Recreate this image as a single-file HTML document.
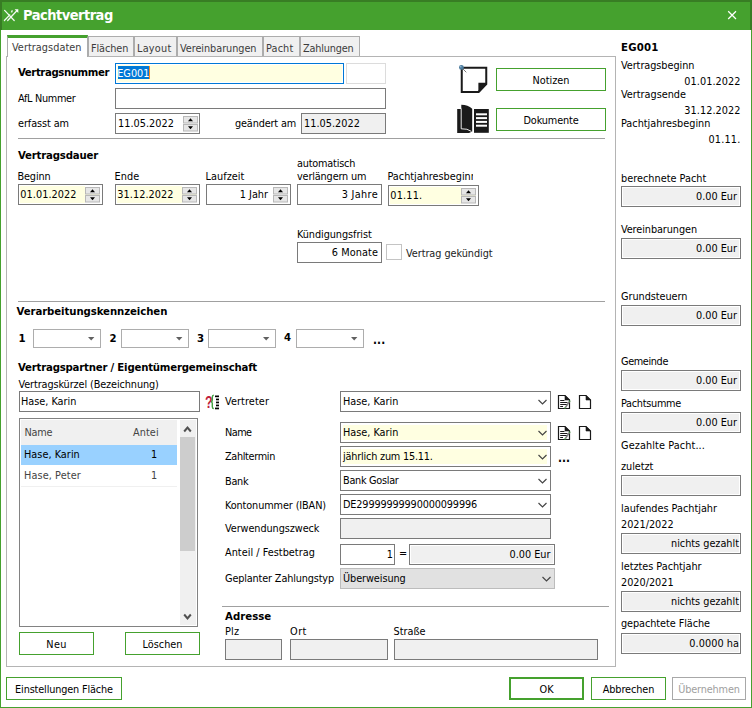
<!DOCTYPE html>
<html><head><meta charset="utf-8"><title>Pachtvertrag</title>
<style>
html,body{margin:0;padding:0;background:#fff}
body{width:752px;height:708px;position:relative;overflow:hidden;font-family:'DejaVu Sans Condensed','Liberation Sans',sans-serif;font-size:10.8px;color:#000}
.a{position:absolute}
.t{white-space:nowrap;line-height:13px;font-size:10.8px}
.f{overflow:hidden}
.b{font-weight:bold;font-size:11.3px}
</style></head><body>
<div class="a " style="left:0px;top:0px;width:752px;height:30px;background:#45a12e"></div>
<div class="a " style="left:0px;top:0px;width:752px;height:2px;background:#387d24"></div>
<div class="a " style="left:0px;top:0px;width:2px;height:30px;background:#387d24"></div>
<div class="a " style="left:750px;top:0px;width:2px;height:30px;background:#387d24"></div>
<div class="a " style="left:0px;top:30px;width:1px;height:678px;background:#45a12e"></div>
<div class="a " style="left:751px;top:30px;width:1px;height:678px;background:#45a12e"></div>
<div class="a " style="left:0px;top:707px;width:752px;height:1px;background:#45a12e"></div>
<div class="a t " style="left:23px;top:11px;font-weight:bold;font-size:14.5px;color:#fff;line-height:18px;top:6px"><span style="letter-spacing:-0.508px">Pachtvertrag</span></div>
<svg class="a" style="left:3px;top:8px" width="17" height="14" viewBox="0 0 17 14"><g stroke="#fff" stroke-width="1.25" fill="none" stroke-linecap="round" opacity="0.95"><path d="M1.6 2.4 L11.2 12.5"/><path d="M1.4 12.5 L6.8 6.9"/><path d="M4.7 12.5 L13.6 3"/></g><path d="M11.6 1.2 H15.3 V4.9 Z" fill="#fff"/><path d="M8.2 2.6 L10 2.2 L9.4 4.6 L7.8 4.4Z" fill="#fff" opacity="0.85"/></svg>
<svg class="a" style="left:727px;top:10px" width="11" height="11" viewBox="0 0 11 11"><path d="M1.2 1.2 L9 9 M9 1.2 L1.2 9" stroke="#fff" stroke-width="1.25" fill="none"/></svg>
<div class="a " style="left:88px;top:36px;width:46px;height:21px;border:1px solid #acacac;background:#f0f0f0;box-sizing:border-box"></div>
<div class="a t " style="left:91px;top:41.5px;color:#3c3c3c"><span style="letter-spacing:-0.082px">Flächen</span></div>
<div class="a " style="left:134px;top:36px;width:43px;height:21px;border:1px solid #acacac;background:#f0f0f0;box-sizing:border-box"></div>
<div class="a t " style="left:137px;top:41.5px;color:#3c3c3c"><span style="letter-spacing:0.247px">Layout</span></div>
<div class="a " style="left:177px;top:36px;width:86px;height:21px;border:1px solid #acacac;background:#f0f0f0;box-sizing:border-box"></div>
<div class="a t " style="left:180px;top:41.5px;color:#3c3c3c"><span style="letter-spacing:-0.044px">Vereinbarungen</span></div>
<div class="a " style="left:263px;top:36px;width:37px;height:21px;border:1px solid #acacac;background:#f0f0f0;box-sizing:border-box"></div>
<div class="a t " style="left:266px;top:41.5px;color:#3c3c3c"><span style="letter-spacing:0.152px">Pacht</span></div>
<div class="a " style="left:300px;top:36px;width:60px;height:21px;border:1px solid #acacac;background:#f0f0f0;box-sizing:border-box"></div>
<div class="a t " style="left:303px;top:41.5px;color:#3c3c3c"><span style="letter-spacing:-0.188px">Zahlungen</span></div>
<div class="a " style="left:6px;top:56px;width:610px;height:611px;border:1px solid #b4b4b4;box-sizing:border-box;background:#fff"></div>
<div class="a " style="left:7px;top:35px;width:81px;height:22px;border:1px solid #acacac;border-bottom:none;border-top:3px solid #45a12e;background:#fff;box-sizing:border-box"></div>
<div class="a t " style="left:12px;top:41px;color:#3c3c3c"><span style="letter-spacing:0.052px">Vertragsdaten</span></div>
<div class="a t b" style="left:18px;top:66px;"><span style="letter-spacing:-0.413px">Vertragsnummer</span></div>
<div class="a " style="left:115px;top:63px;width:229px;height:21px;border:1px solid #0078d7;background:#fff;box-sizing:border-box"><div class="a" style="left:1px;top:1px;right:1px;bottom:1px;background:#ffffe1"></div><span class="a t" style="left:2px;top:2px;width:31px;height:13px;line-height:15.6px;background:#0078d7;color:#fff;overflow:hidden;text-indent:-0.8px"><span style="letter-spacing:0.019px">EG001</span></span><div class="a" style="left:33px;top:2px;width:1px;height:13px;background:#ff8c1a"></div></div>
<div class="a " style="left:346px;top:63px;width:40px;height:21px;border:1px solid #dcdcdc;background:#fff;box-sizing:border-box"></div>
<div class="a t " style="left:18px;top:92px;"><span style="letter-spacing:-0.300px">AfL Nummer</span></div>
<div class="a t f" style="left:115px;top:88px;width:271px;height:21px;border:1px solid #7a7a7a;background:#fff;box-sizing:border-box;line-height:19px;text-align:left;padding:0 2px;color:#000;"></div>
<div class="a t " style="left:18px;top:117px;"><span style="letter-spacing:-0.077px">erfasst am</span></div>
<div class="a t f" style="left:115px;top:113px;width:85px;height:21px;border:1px solid #7a7a7a;background:#fff;box-sizing:border-box;line-height:19px;text-align:left;padding:0 2px;color:#000;"><span><span style="letter-spacing:0.039px">11.05.2022</span></span></div>
<svg class="a" style="left:183px;top:116px" width="15" height="16" viewBox="0 0 15 16"><rect x="0.5" y="0.5" width="14" height="6.5" fill="#e6e6e6" stroke="#b8b8b8"/><path d="M5 5.2 h5 l-2.5 -3z" fill="#000"/><rect x="0.5" y="8.5" width="14" height="6.5" fill="#e6e6e6" stroke="#b8b8b8"/><path d="M5 10.3 h5 l-2.5 3z" fill="#000"/></svg>
<div class="a t " style="left:235px;top:117px;"><span style="letter-spacing:-0.155px">geändert am</span></div>
<div class="a t f" style="left:301px;top:113px;width:85px;height:21px;border:1px solid #7a7a7a;background:#f0f0f0;box-sizing:border-box;line-height:19px;text-align:left;padding:0 2px;color:#000;"><span><span style="letter-spacing:0.039px">11.05.2022</span></span></div>
<div class="a " style="left:18px;top:138px;width:587px;height:1px;background:#a0a0a0"></div>
<svg class="a" style="left:455px;top:62px" width="36" height="34" viewBox="0 0 36 34"><g transform="translate(-455,-62)"><path d="M461.75 67.75 H486.25 V84 L478.5 92 H461.75 Z" fill="#fff" stroke="#1a1a1a" stroke-width="2"/><path d="M478.4 82.7 H487 V84 L479.4 92.6 H478.4 Z" fill="#1a1a1a"/><path d="M462.5 68.5 L466.3 72.3" stroke="#555" stroke-width="0.8"/><circle cx="461.4" cy="67.4" r="2.4" fill="#4a7a9c"/><circle cx="460.8" cy="66.8" r="0.8" fill="#9cc0dc"/></g></svg>
<div class="a t" style="left:496px;top:68px;width:110px;height:23px;border:1px solid #45a12e;background:#fff;box-sizing:border-box;line-height:24.6px;text-align:center;color:#000;overflow:hidden"><span style="letter-spacing:0.007px">Notizen</span></div>
<svg class="a" style="left:455px;top:103px" width="36" height="32" viewBox="0 0 36 32"><g transform="translate(-455,-103)"><path d="M457.2 109 H461.3 V104.8 Q468 105 472.2 108.8 V131.4 L469 133 H457.2 Z" fill="#1a1a1a"/><path d="M461.2 108.6 V128.8 Q467.5 128.4 471.4 131.4" fill="none" stroke="#fff" stroke-width="0.9"/><rect x="474" y="109" width="14.8" height="23.8" fill="#1a1a1a"/><g fill="#fff"><rect x="476" y="113.3" width="11" height="2"/><rect x="476" y="117.1" width="11" height="2"/><rect x="476" y="120.9" width="11" height="2"/><rect x="476" y="124.7" width="11" height="2"/></g></g></svg>
<div class="a t" style="left:496px;top:108px;width:110px;height:23px;border:1px solid #45a12e;background:#fff;box-sizing:border-box;line-height:24.6px;text-align:center;color:#000;overflow:hidden"><span style="letter-spacing:-0.141px">Dokumente</span></div>
<div class="a t b" style="left:18px;top:149px;"><span style="letter-spacing:-0.192px">Vertragsdauer</span></div>
<div class="a t " style="left:17.5px;top:170px;"><span style="letter-spacing:-0.138px">Beginn</span></div>
<div class="a t " style="left:114.5px;top:170px;"><span style="letter-spacing:0.074px">Ende</span></div>
<div class="a t " style="left:205.5px;top:170px;"><span style="letter-spacing:0.059px">Laufzeit</span></div>
<div class="a t " style="left:297px;top:157px;"><span style="letter-spacing:-0.195px">automatisch</span></div>
<div class="a t " style="left:297px;top:170px;"><span style="letter-spacing:-0.150px">verlängern um</span></div>
<div class="a " style="left:387px;top:168px;width:85.5px;height:18px;overflow:hidden"><div class="t" style="position:absolute;left:0.5px;top:2px"><span style="letter-spacing:-0.010px">Pachtjahresbeginn</span></div></div>
<div class="a t f" style="left:18px;top:184px;width:85px;height:21px;border:1px solid #7a7a7a;background:#fff;box-sizing:border-box;line-height:19px;text-align:left;padding:0 1.3px;color:#000;"><div class="a" style="left:1px;top:1px;right:17px;bottom:1px;background:#ffffe1"></div><span style="position:relative"><span style="letter-spacing:0.059px">01.01.2022</span></span></div>
<svg class="a" style="left:85px;top:187px" width="15" height="16" viewBox="0 0 15 16"><rect x="0" y="7" width="15" height="1.2" fill="#ffffe1"/><rect x="0.5" y="0.5" width="14" height="6.5" fill="#e6e6e6" stroke="#b8b8b8"/><path d="M5 5.2 h5 l-2.5 -3z" fill="#000"/><rect x="0.5" y="8.5" width="14" height="6.5" fill="#e6e6e6" stroke="#b8b8b8"/><path d="M5 10.3 h5 l-2.5 3z" fill="#000"/></svg>
<div class="a t f" style="left:115px;top:184px;width:85px;height:21px;border:1px solid #7a7a7a;background:#fff;box-sizing:border-box;line-height:19px;text-align:left;padding:0 1.3px;color:#000;"><div class="a" style="left:1px;top:1px;right:17px;bottom:1px;background:#ffffe1"></div><span style="position:relative"><span style="letter-spacing:0.059px">31.12.2022</span></span></div>
<svg class="a" style="left:182px;top:187px" width="15" height="16" viewBox="0 0 15 16"><rect x="0" y="7" width="15" height="1.2" fill="#ffffe1"/><rect x="0.5" y="0.5" width="14" height="6.5" fill="#e6e6e6" stroke="#b8b8b8"/><path d="M5 5.2 h5 l-2.5 -3z" fill="#000"/><rect x="0.5" y="8.5" width="14" height="6.5" fill="#e6e6e6" stroke="#b8b8b8"/><path d="M5 10.3 h5 l-2.5 3z" fill="#000"/></svg>
<div class="a t f" style="left:206px;top:184px;width:85px;height:21px;border:1px solid #7a7a7a;background:#fff;box-sizing:border-box;line-height:19px;text-align:right;padding:0 2px;color:#000;padding-right:22px"><span>1 Jahr</span></div>
<svg class="a" style="left:273px;top:187px" width="15" height="16" viewBox="0 0 15 16"><rect x="0.5" y="0.5" width="14" height="6.5" fill="#e6e6e6" stroke="#b8b8b8"/><path d="M5 5.2 h5 l-2.5 -3z" fill="#000"/><rect x="0.5" y="8.5" width="14" height="6.5" fill="#e6e6e6" stroke="#b8b8b8"/><path d="M5 10.3 h5 l-2.5 3z" fill="#000"/></svg>
<div class="a t f" style="left:297px;top:184px;width:85px;height:21px;border:1px solid #7a7a7a;background:#fff;box-sizing:border-box;line-height:19px;text-align:right;padding:0 3px;color:#000;"><span><span style="letter-spacing:0.333px">3 Jahre</span></span></div>
<div class="a t f" style="left:388px;top:185px;width:91px;height:21px;border:1px solid #7a7a7a;background:#fff;box-sizing:border-box;line-height:19px;text-align:left;padding:0 1.3px;color:#000;"><div class="a" style="left:1px;top:1px;right:17px;bottom:1px;background:#ffffe1"></div><span style="position:relative"><span style="letter-spacing:0.185px">01.11.</span></span></div>
<svg class="a" style="left:461px;top:188px" width="15" height="16" viewBox="0 0 15 16"><rect x="0" y="7" width="15" height="1.2" fill="#ffffe1"/><rect x="0.5" y="0.5" width="14" height="6.5" fill="#e6e6e6" stroke="#b8b8b8"/><path d="M5 5.2 h5 l-2.5 -3z" fill="#000"/><rect x="0.5" y="8.5" width="14" height="6.5" fill="#e6e6e6" stroke="#b8b8b8"/><path d="M5 10.3 h5 l-2.5 3z" fill="#000"/></svg>
<div class="a t " style="left:297px;top:228px;"><span style="letter-spacing:-0.067px">Kündigungsfrist</span></div>
<div class="a t f" style="left:297px;top:242px;width:85px;height:21px;border:1px solid #7a7a7a;background:#fff;box-sizing:border-box;line-height:19px;text-align:right;padding:0 3px;color:#000;"><span><span style="letter-spacing:0.089px">6 Monate</span></span></div>
<div class="a " style="left:386px;top:244px;width:16px;height:16px;border:1px solid #c4c4c4;background:#fff;box-sizing:border-box"></div>
<div class="a t " style="left:406px;top:247px;color:#222"><span style="letter-spacing:-0.046px">Vertrag gekündigt</span></div>
<div class="a " style="left:18px;top:301px;width:587px;height:1px;background:#a0a0a0"></div>
<div class="a t b" style="left:16.5px;top:304.5px;"><span style="letter-spacing:-0.086px">Verarbeitungskennzeichen</span></div>
<div class="a t b" style="left:18.5px;top:331.5px;">1</div>
<div class="a t f" style="left:33px;top:329px;width:68px;height:19px;border:1px solid #adadad;background:#fff;box-sizing:border-box;line-height:17px;text-align:left;padding:0 2px;color:#000;"></div>
<svg class="a" style="left:88px;top:337px" width="7" height="4" viewBox="0 0 7 4"><path d="M0 0 h6.4 l-3.2 3.4z" fill="#606060"/></svg>
<div class="a t b" style="left:109.5px;top:331.5px;">2</div>
<div class="a t f" style="left:121px;top:329px;width:68px;height:19px;border:1px solid #adadad;background:#fff;box-sizing:border-box;line-height:17px;text-align:left;padding:0 2px;color:#000;"></div>
<svg class="a" style="left:176px;top:337px" width="7" height="4" viewBox="0 0 7 4"><path d="M0 0 h6.4 l-3.2 3.4z" fill="#606060"/></svg>
<div class="a t b" style="left:197px;top:331.5px;">3</div>
<div class="a t f" style="left:208px;top:329px;width:68px;height:19px;border:1px solid #adadad;background:#fff;box-sizing:border-box;line-height:17px;text-align:left;padding:0 2px;color:#000;"></div>
<svg class="a" style="left:263px;top:337px" width="7" height="4" viewBox="0 0 7 4"><path d="M0 0 h6.4 l-3.2 3.4z" fill="#606060"/></svg>
<div class="a t b" style="left:284px;top:330.5px;">4</div>
<div class="a t f" style="left:296px;top:329px;width:68px;height:19px;border:1px solid #adadad;background:#fff;box-sizing:border-box;line-height:17px;text-align:left;padding:0 2px;color:#000;"></div>
<svg class="a" style="left:351px;top:337px" width="7" height="4" viewBox="0 0 7 4"><path d="M0 0 h6.4 l-3.2 3.4z" fill="#606060"/></svg>
<div class="a t b" style="left:373px;top:334px;letter-spacing:0.15px;font-size:11.6px">...</div>
<div class="a t b" style="left:18px;top:360.5px;"><span style="letter-spacing:-0.210px">Vertragspartner / Eigentümergemeinschaft</span></div>
<div class="a t " style="left:18.5px;top:378px;"><span style="letter-spacing:-0.104px">Vertragskürzel (Bezeichnung)</span></div>
<div class="a t f" style="left:19px;top:391px;width:181px;height:21px;border:1px solid #7a7a7a;background:#fff;box-sizing:border-box;line-height:19px;text-align:left;padding:0 1px;color:#000;"><span><span style="letter-spacing:-0.005px">Hase, Karin</span></span></div>
<div class="a" style="left:204.8px;top:394.2px;font:bold 16px/18px 'Liberation Sans',sans-serif;color:#c0203a;transform:scaleX(0.78);transform-origin:0 0">?</div>
<svg class="a" style="left:210px;top:394px" width="10" height="16" viewBox="0 0 10 16"><path d="M3.8 1.2 Q2.3 1.2 2.3 3 V6 Q2.3 7.8 1 7.8 Q2.3 7.8 2.3 9.6 V12.8 Q2.3 14.6 3.8 14.6" stroke="#3fa03f" stroke-width="1.4" fill="none"/><g fill="#000"><rect x="5" y="1.5" width="4" height="1.7"/><rect x="6" y="4.6" width="3" height="1.7"/><rect x="6" y="7.6" width="3" height="1.7"/><rect x="6" y="10.6" width="3" height="1.7"/><rect x="5" y="13.6" width="4" height="1.7"/></g></svg>
<div class="a t " style="left:225px;top:395px;"><span style="letter-spacing:0.101px">Vertreter</span></div>
<div class="a t f" style="left:340px;top:391px;width:211px;height:21px;border:1px solid #7a7a7a;background:#fff;box-sizing:border-box;line-height:19px;text-align:left;padding:0 2px;color:#000;"><span><span style="letter-spacing:-0.005px">Hase, Karin</span></span></div>
<svg class="a" style="left:537.7px;top:398.8px" width="9" height="6" viewBox="0 0 9 6"><path d="M0.5 1 L4.5 5 L8.5 1" stroke="#444" stroke-width="1.15" fill="none"/></svg>
<div class="a t " style="left:225px;top:426px;"><span style="letter-spacing:-0.543px">Name</span></div>
<div class="a t f" style="left:340px;top:422px;width:211px;height:21px;border:1px solid #7a7a7a;background:#fff;box-sizing:border-box;line-height:19px;text-align:left;padding:0 2px;color:#000;"><div class="a" style="left:2px;top:2px;right:3px;bottom:2px;background:#ffffe1"></div><span style="position:relative"><span style="letter-spacing:-0.005px">Hase, Karin</span></span></div>
<svg class="a" style="left:537.7px;top:429.8px" width="9" height="6" viewBox="0 0 9 6"><path d="M0.5 1 L4.5 5 L8.5 1" stroke="#444" stroke-width="1.15" fill="none"/></svg>
<div class="a t " style="left:225px;top:450px;"><span style="letter-spacing:-0.338px">Zahltermin</span></div>
<div class="a t f" style="left:340px;top:446px;width:211px;height:21px;border:1px solid #7a7a7a;background:#fff;box-sizing:border-box;line-height:19px;text-align:left;padding:0 2px;color:#000;"><div class="a" style="left:2px;top:2px;right:3px;bottom:2px;background:#ffffe1"></div><span style="position:relative"><span style="letter-spacing:-0.198px">jährlich zum 15.11.</span></span></div>
<svg class="a" style="left:537.7px;top:453.8px" width="9" height="6" viewBox="0 0 9 6"><path d="M0.5 1 L4.5 5 L8.5 1" stroke="#444" stroke-width="1.15" fill="none"/></svg>
<div class="a t " style="left:225px;top:475px;"><span style="letter-spacing:-0.252px">Bank</span></div>
<div class="a t f" style="left:340px;top:470px;width:211px;height:21px;border:1px solid #7a7a7a;background:#fff;box-sizing:border-box;line-height:19px;text-align:left;padding:0 2px;color:#000;"><span><span style="letter-spacing:-0.287px">Bank Goslar</span></span></div>
<svg class="a" style="left:537.7px;top:477.8px" width="9" height="6" viewBox="0 0 9 6"><path d="M0.5 1 L4.5 5 L8.5 1" stroke="#444" stroke-width="1.15" fill="none"/></svg>
<div class="a t " style="left:225px;top:499px;"><span style="letter-spacing:-0.111px">Kontonummer (IBAN)</span></div>
<div class="a t f" style="left:340px;top:494px;width:211px;height:21px;border:1px solid #7a7a7a;background:#fff;box-sizing:border-box;line-height:19px;text-align:left;padding:0 2px;color:#000;"><span><span style="letter-spacing:-0.146px">DE29999999990000099996</span></span></div>
<svg class="a" style="left:537.7px;top:501.8px" width="9" height="6" viewBox="0 0 9 6"><path d="M0.5 1 L4.5 5 L8.5 1" stroke="#444" stroke-width="1.15" fill="none"/></svg>
<svg class="a" style="left:557px;top:394px" width="14" height="16" viewBox="0 0 14 16"><path d="M1.5 1.5 H8 L12.5 6 V14.5 H1.5 Z" fill="#fff" stroke="#1a1a1a" stroke-width="1.2"/><path d="M8 1.5 L12.5 6 H8 Z" fill="#1a1a1a" stroke="#1a1a1a" stroke-width="0.6"/><g stroke="#1a1a1a" stroke-width="1"><line x1="3.2" y1="6.5" x2="7.5" y2="6.5"/><line x1="3.2" y1="8.5" x2="10.5" y2="8.5"/><line x1="3.2" y1="10.5" x2="10.5" y2="10.5"/><line x1="3.2" y1="12.5" x2="6" y2="12.5"/></g><path d="M12.3 7.6 L8.3 13.6" stroke="#808080" stroke-width="1.7"/><circle cx="12.7" cy="7.2" r="0.8" fill="#3fa03f"/><circle cx="8" cy="14" r="0.8" fill="#3fa03f"/></svg>
<svg class="a" style="left:578px;top:394px" width="14" height="16" viewBox="0 0 14 16"><path d="M1.5 1.5 H8 L12.5 6 V14.5 H1.5 Z" fill="#fff" stroke="#1a1a1a" stroke-width="1.2"/><path d="M8 1.5 L12.5 6 H8 Z" fill="#1a1a1a" stroke="#1a1a1a" stroke-width="0.6"/></svg>
<svg class="a" style="left:557px;top:425px" width="14" height="16" viewBox="0 0 14 16"><path d="M1.5 1.5 H8 L12.5 6 V14.5 H1.5 Z" fill="#fff" stroke="#1a1a1a" stroke-width="1.2"/><path d="M8 1.5 L12.5 6 H8 Z" fill="#1a1a1a" stroke="#1a1a1a" stroke-width="0.6"/><g stroke="#1a1a1a" stroke-width="1"><line x1="3.2" y1="6.5" x2="7.5" y2="6.5"/><line x1="3.2" y1="8.5" x2="10.5" y2="8.5"/><line x1="3.2" y1="10.5" x2="10.5" y2="10.5"/><line x1="3.2" y1="12.5" x2="6" y2="12.5"/></g><path d="M12.3 7.6 L8.3 13.6" stroke="#808080" stroke-width="1.7"/><circle cx="12.7" cy="7.2" r="0.8" fill="#3fa03f"/><circle cx="8" cy="14" r="0.8" fill="#3fa03f"/></svg>
<svg class="a" style="left:578px;top:425px" width="14" height="16" viewBox="0 0 14 16"><path d="M1.5 1.5 H8 L12.5 6 V14.5 H1.5 Z" fill="#fff" stroke="#1a1a1a" stroke-width="1.2"/><path d="M8 1.5 L12.5 6 H8 Z" fill="#1a1a1a" stroke="#1a1a1a" stroke-width="0.6"/></svg>
<div class="a t b" style="left:557.9px;top:452.4px;letter-spacing:0.15px;font-size:11.6px">...</div>
<div class="a t " style="left:225px;top:522px;"><span style="letter-spacing:-0.073px">Verwendungszweck</span></div>
<div class="a t f" style="left:340px;top:518px;width:211px;height:21px;border:1px solid #7a7a7a;background:#f0f0f0;box-sizing:border-box;line-height:19px;text-align:left;padding:0 2px;color:#000;"></div>
<div class="a t " style="left:225px;top:545.5px;"><span style="letter-spacing:0.029px">Anteil / Festbetrag</span></div>
<div class="a t f" style="left:340px;top:544px;width:55px;height:21px;border:1px solid #7a7a7a;background:#fff;box-sizing:border-box;line-height:19px;text-align:right;padding:0 1px;color:#000;"><span>1</span></div>
<div class="a t " style="left:399px;top:547px;">=</div>
<div class="a t f" style="left:409px;top:544px;width:146px;height:21px;border:1px solid #7a7a7a;background:#fff;box-sizing:border-box;line-height:19px;text-align:right;padding:0 3.5px;color:#000;"><div class="a" style="left:1px;top:1px;right:1px;bottom:1px;background:#f0f0f0"></div><span style="position:relative"><span style="letter-spacing:0.000px">0.00 Eur</span></span></div>
<div class="a t " style="left:225px;top:572px;"><span style="letter-spacing:-0.147px">Geplanter Zahlungstyp</span></div>
<div class="a t f" style="left:340px;top:568px;width:215px;height:21px;border:1px solid #bcbcbc;background:#e1e1e1;box-sizing:border-box;line-height:19px;text-align:left;padding:0 2px;color:#000;"><span><span style="letter-spacing:-0.066px">Überweisung</span></span></div>
<svg class="a" style="left:541.5px;top:576px" width="9" height="6" viewBox="0 0 9 6"><path d="M0.5 1 L4.5 5 L8.5 1" stroke="#444" stroke-width="1.15" fill="none"/></svg>
<div class="a " style="left:222px;top:606px;width:387px;height:1px;background:#a0a0a0"></div>
<div class="a t b" style="left:225px;top:609.5px;"><span style="letter-spacing:0.020px">Adresse</span></div>
<div class="a t " style="left:225px;top:624.5px;"><span style="letter-spacing:0.215px">Plz</span></div>
<div class="a t " style="left:290px;top:624.5px;"><span style="letter-spacing:0.482px">Ort</span></div>
<div class="a t " style="left:393.5px;top:624.5px;">Straße</div>
<div class="a t f" style="left:225px;top:639px;width:57px;height:21px;border:1px solid #7a7a7a;background:#f0f0f0;box-sizing:border-box;line-height:19px;text-align:left;padding:0 2px;color:#000;"></div>
<div class="a t f" style="left:290px;top:639px;width:98px;height:21px;border:1px solid #7a7a7a;background:#f0f0f0;box-sizing:border-box;line-height:19px;text-align:left;padding:0 2px;color:#000;"></div>
<div class="a t f" style="left:394px;top:639px;width:204px;height:21px;border:1px solid #7a7a7a;background:#f0f0f0;box-sizing:border-box;line-height:19px;text-align:left;padding:0 2px;color:#000;"></div>
<div class="a " style="left:19px;top:418px;width:179px;height:209px;border:1px solid #828282;background:#fff;box-sizing:border-box"></div>
<div class="a " style="left:21px;top:420px;width:156px;height:25px;background:#f0f0f0"></div>
<div class="a t " style="left:24.5px;top:425.5px;color:#444"><span style="letter-spacing:-0.268px">Name</span></div>
<div class="a t " style="left:133px;top:425.5px;color:#444"><span style="letter-spacing:0.081px">Antei</span></div>
<div class="a " style="left:21px;top:445px;width:156px;height:20px;background:#99d1ff"></div>
<div class="a t " style="left:24px;top:447.5px;"><span style="letter-spacing:0.032px">Hase, Karin</span></div>
<div class="a t " style="left:151px;top:447.5px;">1</div>
<div class="a t " style="left:24px;top:468.5px;color:#444"><span style="letter-spacing:0.109px">Hase, Peter</span></div>
<div class="a t " style="left:151px;top:468.5px;color:#444">1</div>
<div class="a " style="left:21px;top:486px;width:156px;height:1px;background:#f0f0f0"></div>
<div class="a " style="left:180px;top:420px;width:16px;height:205px;background:#f0f0f0"></div>
<div class="a " style="left:180px;top:437px;width:15px;height:114px;background:#cdcdcd"></div>
<svg class="a" style="left:183px;top:425px" width="9" height="8" viewBox="0 0 9 8"><path d="M1.2 6.5 L4.5 2.6 L7.8 6.5" stroke="#505050" stroke-width="2" fill="none"/></svg>
<svg class="a" style="left:183px;top:613px" width="9" height="8" viewBox="0 0 9 8"><path d="M1.2 1.5 L4.5 5.4 L7.8 1.5" stroke="#505050" stroke-width="2" fill="none"/></svg>
<div class="a t" style="left:19px;top:632px;width:75px;height:23px;border:1px solid #45a12e;background:#fff;box-sizing:border-box;line-height:24.6px;text-align:center;color:#000;overflow:hidden"><span style="letter-spacing:0.365px">Neu</span></div>
<div class="a t" style="left:125px;top:632px;width:75px;height:23px;border:1px solid #45a12e;background:#fff;box-sizing:border-box;line-height:24.6px;text-align:center;color:#000;overflow:hidden"><span style="letter-spacing:0.020px">Löschen</span></div>
<div class="a t b" style="left:621px;top:40.5px;"><span style="letter-spacing:0.200px">EG001</span></div>
<div class="a t " style="left:621px;top:59px;"><span style="letter-spacing:-0.050px">Vertragsbeginn</span></div>
<div class="a t " style="right:11.5px;top:75px;"><span style="letter-spacing:0.059px">01.01.2022</span></div>
<div class="a t " style="left:621px;top:88px;"><span style="letter-spacing:-0.004px">Vertragsende</span></div>
<div class="a t " style="right:11.5px;top:104px;"><span style="letter-spacing:0.059px">31.12.2022</span></div>
<div class="a t " style="left:621px;top:117px;"><span style="letter-spacing:-0.010px">Pachtjahresbeginn</span></div>
<div class="a t " style="right:11.5px;top:133px;"><span style="letter-spacing:0.185px">01.11.</span></div>
<div class="a t " style="left:621px;top:171.5px;"><span style="letter-spacing:0.018px">berechnete Pacht</span></div>
<div class="a t f" style="left:621px;top:186px;width:120px;height:21px;border:1px solid #7a7a7a;background:#fff;box-sizing:border-box;line-height:19px;text-align:right;padding:0 3px;color:#000;"><div class="a" style="left:1px;top:1px;right:1px;bottom:1px;background:#f0f0f0"></div><span style="position:relative"><span style="letter-spacing:0.000px">0.00 Eur</span></span></div>
<div class="a t " style="left:621px;top:223px;"><span style="letter-spacing:-0.079px">Vereinbarungen</span></div>
<div class="a t f" style="left:621px;top:238px;width:120px;height:21px;border:1px solid #7a7a7a;background:#fff;box-sizing:border-box;line-height:19px;text-align:right;padding:0 3px;color:#000;"><div class="a" style="left:1px;top:1px;right:1px;bottom:1px;background:#f0f0f0"></div><span style="position:relative"><span style="letter-spacing:0.000px">0.00 Eur</span></span></div>
<div class="a t " style="left:621px;top:289.5px;"><span style="letter-spacing:-0.046px">Grundsteuern</span></div>
<div class="a t f" style="left:621px;top:305px;width:120px;height:21px;border:1px solid #7a7a7a;background:#fff;box-sizing:border-box;line-height:19px;text-align:right;padding:0 3px;color:#000;"><div class="a" style="left:1px;top:1px;right:1px;bottom:1px;background:#f0f0f0"></div><span style="position:relative"><span style="letter-spacing:0.000px">0.00 Eur</span></span></div>
<div class="a t " style="left:621px;top:354.5px;"><span style="letter-spacing:-0.369px">Gemeinde</span></div>
<div class="a t f" style="left:621px;top:370px;width:120px;height:21px;border:1px solid #7a7a7a;background:#fff;box-sizing:border-box;line-height:19px;text-align:right;padding:0 3px;color:#000;"><div class="a" style="left:1px;top:1px;right:1px;bottom:1px;background:#f0f0f0"></div><span style="position:relative"><span style="letter-spacing:0.000px">0.00 Eur</span></span></div>
<div class="a t " style="left:621px;top:396.5px;"><span style="letter-spacing:-0.277px">Pachtsumme</span></div>
<div class="a t f" style="left:621px;top:412px;width:120px;height:21px;border:1px solid #7a7a7a;background:#fff;box-sizing:border-box;line-height:19px;text-align:right;padding:0 3px;color:#000;"><div class="a" style="left:1px;top:1px;right:1px;bottom:1px;background:#f0f0f0"></div><span style="position:relative"><span style="letter-spacing:0.000px">0.00 Eur</span></span></div>
<div class="a t " style="left:621px;top:438.5px;"><span style="letter-spacing:0.108px">Gezahlte Pacht...</span></div>
<div class="a t " style="left:621px;top:460px;"><span style="letter-spacing:-0.037px">zuletzt</span></div>
<div class="a t f" style="left:621px;top:475px;width:120px;height:21px;border:1px solid #7a7a7a;background:#fff;box-sizing:border-box;line-height:19px;text-align:right;padding:0 3px;color:#000;"><div class="a" style="left:1px;top:1px;right:1px;bottom:1px;background:#f0f0f0"></div><span style="position:relative"></span></div>
<div class="a t " style="left:621px;top:501.5px;"><span style="letter-spacing:-0.005px">laufendes Pachtjahr</span></div>
<div class="a t " style="left:621px;top:517.5px;"><span style="letter-spacing:-0.013px">2021/2022</span></div>
<div class="a t f" style="left:621px;top:533px;width:120px;height:21px;border:1px solid #7a7a7a;background:#fff;box-sizing:border-box;line-height:19px;text-align:right;padding:0 1px;color:#000;"><div class="a" style="left:1px;top:1px;right:1px;bottom:1px;background:#f0f0f0"></div><span style="position:relative"><span style="letter-spacing:-0.012px">nichts gezahlt</span></span></div>
<div class="a t " style="left:621px;top:559.5px;"><span style="letter-spacing:-0.021px">letztes Pachtjahr</span></div>
<div class="a t " style="left:621px;top:575.5px;"><span style="letter-spacing:-0.013px">2020/2021</span></div>
<div class="a t f" style="left:621px;top:591px;width:120px;height:21px;border:1px solid #7a7a7a;background:#fff;box-sizing:border-box;line-height:19px;text-align:right;padding:0 1px;color:#000;"><div class="a" style="left:1px;top:1px;right:1px;bottom:1px;background:#f0f0f0"></div><span style="position:relative"><span style="letter-spacing:-0.012px">nichts gezahlt</span></span></div>
<div class="a t " style="left:621px;top:617px;"><span style="letter-spacing:-0.067px">gepachtete Fläche</span></div>
<div class="a t f" style="left:621px;top:633px;width:120px;height:21px;border:1px solid #7a7a7a;background:#fff;box-sizing:border-box;line-height:19px;text-align:right;padding:0 1px;color:#000;"><div class="a" style="left:1px;top:1px;right:1px;bottom:1px;background:#f0f0f0"></div><span style="position:relative"><span style="letter-spacing:0.059px">0.0000 ha</span></span></div>
<div class="a t" style="left:6px;top:677px;width:116px;height:23px;border:1px solid #45a12e;background:#fff;box-sizing:border-box;line-height:24.6px;text-align:center;color:#000;overflow:hidden"><span style="letter-spacing:-0.144px">Einstellungen Fläche</span></div>
<div class="a t" style="left:509px;top:677px;width:75px;height:23px;border:2px solid #45a12e;background:#fff;box-sizing:border-box;line-height:22.6px;text-align:center;color:#000;overflow:hidden">OK</div>
<div class="a t" style="left:591px;top:677px;width:75px;height:23px;border:1px solid #45a12e;background:#fff;box-sizing:border-box;line-height:24.6px;text-align:center;color:#000;overflow:hidden"><span style="letter-spacing:-0.073px">Abbrechen</span></div>
<div class="a t" style="left:672px;top:677px;width:74px;height:23px;border:1px solid #a8a8a8;background:#fff;box-sizing:border-box;line-height:24.6px;text-align:center;color:#a0a0a0;overflow:hidden"><span style="letter-spacing:-0.125px">Übernehmen</span></div>
</body></html>
